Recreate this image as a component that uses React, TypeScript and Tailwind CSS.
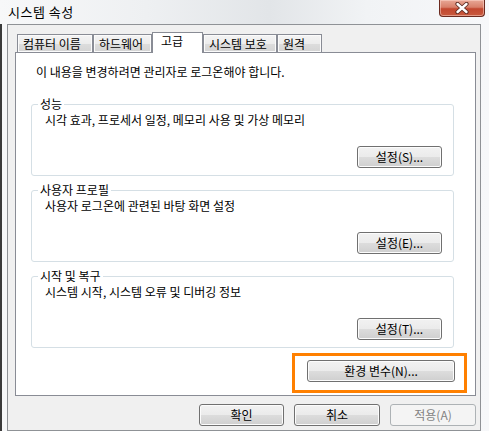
import React from "react";

const tabs = [
  { label: "컴퓨터 이름", w: "w-[76px]", active: false },
  { label: "하드웨어", w: "w-[59px]", active: false },
  { label: "고급", w: "w-[51px]", active: true },
  { label: "시스템 보호", w: "w-[74px]", active: false },
  { label: "원격", w: "w-[45px]", active: false },
];

const groups = [
  { title: "성능", desc: "시각 효과, 프로세서 일정, 메모리 사용 및 가상 메모리", btn: "설정(S)..." },
  { title: "사용자 프로필", desc: "사용자 로그온에 관련된 바탕 화면 설정", btn: "설정(E)..." },
  { title: "시작 및 복구", desc: "시스템 시작, 시스템 오류 및 디버깅 정보", btn: "설정(T)..." },
];

const btnBase =
  "h-[22px] rounded-[3px] text-[12px] leading-[14px] flex items-center justify-center";
const btnOn =
  "border border-[#707070] text-black bg-[linear-gradient(to_bottom,#f2f2f2_0%,#ebebeb_50%,#dddddd_50%,#cfcfcf_100%)] shadow-[inset_0_0_0_1px_#fcfcfc]";
const btnOff = "border border-[#adb2b5] text-[#838383] bg-[#f4f4f4]";

const CloseIcon = () => (
  <svg width="18" height="12" viewBox="0 0 18 12">
    <path
      d="M4.5 2 L13.5 10 M13.5 2 L4.5 10"
      stroke="#5a2a22"
      strokeWidth="4.2"
      strokeLinecap="round"
      fill="none"
    />
    <path
      d="M4.5 2 L13.5 10 M13.5 2 L4.5 10"
      stroke="#ffffff"
      strokeWidth="2.4"
      strokeLinecap="round"
      fill="none"
    />
  </svg>
);

export default function App() {
  return (
    <div className="w-[489px] h-[431px] overflow-hidden flex flex-col font-['Noto_Sans_CJK_KR','Noto_Sans',sans-serif] bg-[linear-gradient(to_right,#f7f8f9_0%,#eef0f2_30%,#e2e5e8_55%,#f1f3f5_75%,#f7f8fa_100%)]">
      {/* title bar */}
      <div className="h-[24px] flex items-start justify-between">
        <span className="pl-[8px] pt-[5px] text-[13px] leading-[14px] tracking-[0.5px] text-black">시스템 속성</span>
        <button className="mr-[4px] w-[46px] h-[17px] rounded-b-[4px] border border-t-0 border-[#6b2a1f] flex items-center justify-center bg-[linear-gradient(to_bottom,#e8a796_0%,#d8806a_45%,#c2472f_55%,#c85a3e_100%)] shadow-[inset_0_0_0_1px_rgba(255,220,210,0.5)]">
          <CloseIcon />
        </button>
      </div>

      {/* body */}
      <div className="flex-1 flex border-l-2 border-[#3b3b3b]">
        <div className="ml-[5px] mr-[8px] flex-1 h-[407px] border border-[#8f9296] bg-[#f0f0f0] pl-[7px] pr-[4px] pt-[7px] flex flex-col">
          {/* tabs */}
          <div className="h-[20px] flex items-end pl-[2px] relative z-10">
            {tabs.map((t) =>
              t.active ? (
                <div
                  key={t.label}
                  className={`${t.w} h-[21px] -mb-px bg-white border border-b-0 border-[#898c95] pl-[8px] pt-[1px] text-[12px] leading-[14px] text-black`}
                >
                  {t.label}
                </div>
              ) : (
                <div
                  key={t.label}
                  className={`${t.w} h-[18px] border border-b-0 border-[#898c95] pl-[5px] pt-[2px] text-[12px] leading-[14px] text-black bg-[linear-gradient(to_bottom,#f4f4f4_0%,#ececec_50%,#dcdcdc_55%,#d4d4d4_100%)] shadow-[inset_0_0_0_1px_#fbfbfb]`}
                >
                  {t.label}
                </div>
              )
            )}
          </div>

          {/* panel */}
          <div className="h-[344px] border border-[#898c95] bg-white pl-[15px] pr-[8px] pt-[12px] flex flex-col">
            <p className="pl-[5px] text-[12px] leading-[14px] text-black">
              이 내용을 변경하려면 관리자로 로그온해야 합니다.
            </p>

            <div className="mt-[18px] mr-[13px] flex flex-col gap-[7px]">
              {groups.map((g) => (
                <fieldset
                  key={g.title}
                  className="border border-[#d5dfe5] rounded-[3px] p-0"
                >
                  <legend className="ml-[6px] px-[2px] text-[12px] leading-[14px] text-black">
                    {g.title}
                  </legend>
                  <div className="pl-[13px] pr-[11px] pb-[7px] flex flex-col">
                    <p className="mt-[2px] text-[12px] leading-[14px] text-black">{g.desc}</p>
                    <div className="mt-[19px] flex justify-end">
                      <button className={`${btnBase} ${btnOn} w-[85px]`}>{g.btn}</button>
                    </div>
                  </div>
                </fieldset>
              ))}
            </div>

            <div className="mt-[5px] flex justify-end">
              <div className="w-[175px] h-[40px] border-[3px] border-[#ff8000] pl-[12px] pt-[4px]">
                <button className={`${btnBase} ${btnOn} w-[148px]`}>환경 변수(N)...</button>
              </div>
            </div>
          </div>

          {/* dialog buttons */}
          <div className="mt-[8px] flex justify-end gap-[10px]">
            <button className={`${btnBase} ${btnOn} w-[85px]`}>확인</button>
            <button className={`${btnBase} ${btnOn} w-[86px]`}>취소</button>
            <button className={`${btnBase} ${btnOff} w-[86px]`}>적용(A)</button>
          </div>
        </div>
      </div>
    </div>
  );
}
